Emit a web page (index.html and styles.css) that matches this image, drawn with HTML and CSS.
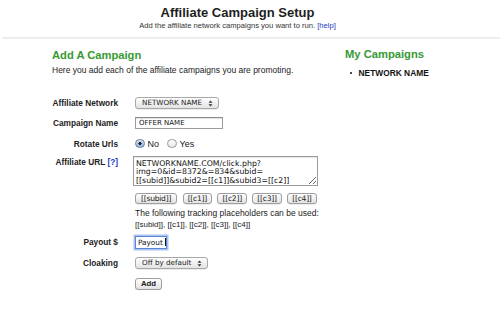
FILE: index.html
```html
<!DOCTYPE html>
<html lang="en">
<head>
<meta charset="utf-8">
<title>Affiliate Campaign Setup</title>
<link rel="stylesheet" href="styles.css">
</head>
<body>
<header class="top">
  <h1 class="title">Affiliate Campaign Setup</h1>
  <p class="subtitle">Add the affiliate network campaigns you want to run. <a class="link" href="#">[help]</a></p>
</header>
<main class="main">
  <section class="left">
    <h2 class="heading">Add A Campaign</h2>
    <p class="desc">Here you add each of the affiliate campaigns you are promoting.</p>
    <form class="form">
      <div class="row row-network">
        <label class="lbl">Affiliate Network</label>
        <div class="select-wrap w-network">
          <select class="select"><option>NETWORK NAME</option></select>
          <svg class="arrows" width="5" height="7" viewBox="0 0 5 7"><path d="M0.5 2.8L2.5 0.6L4.5 2.8Z M0.5 4.2L2.5 6.4L4.5 4.2Z" fill="#333"/></svg>
        </div>
      </div>
      <div class="row row-name">
        <label class="lbl">Campaign Name</label>
        <input class="text w-name" type="text" value="OFFER NAME">
      </div>
      <div class="row row-rotate">
        <label class="lbl">Rotate Urls</label>
        <div class="radios">
          <input class="radio" type="radio" name="rot" checked>
          <span class="rtext">No</span>
          <input class="radio" type="radio" name="rot">
          <span class="rtext">Yes</span>
        </div>
      </div>
      <div class="row row-url">
        <label class="lbl lbl-url">Affiliate URL <a class="link" href="#">[?]</a></label>
        <div class="url-col">
          <textarea class="area">NETWORKNAME.COM/click.php?
img=0&amp;id=8372&amp;=834&amp;subid=
[[subid]]&amp;subid2=[[c1]]&amp;subid3=[[c2]]</textarea>
          <div class="ph-row">
            <button class="btn btn-ph btn-subid" type="button">[[subid]]</button>
            <button class="btn btn-ph" type="button">[[c1]]</button>
            <button class="btn btn-ph" type="button">[[c2]]</button>
            <button class="btn btn-ph" type="button">[[c3]]</button>
            <button class="btn btn-ph" type="button">[[c4]]</button>
          </div>
          <p class="help1">The following tracking placeholders can be used:</p>
          <p class="help2">[[subid]], [[c1]], [[c2]], [[c3]], [[c4]]</p>
        </div>
      </div>
      <div class="row row-payout">
        <label class="lbl">Payout $</label>
        <span class="focus-wrap"><input class="text w-payout focus" type="text" value="Payout"></span>
      </div>
      <div class="row row-cloak">
        <label class="lbl">Cloaking</label>
        <div class="select-wrap w-cloak">
          <select class="select"><option>Off by default</option></select>
          <svg class="arrows" width="5" height="7" viewBox="0 0 5 7"><path d="M0.5 2.8L2.5 0.6L4.5 2.8Z M0.5 4.2L2.5 6.4L4.5 4.2Z" fill="#333"/></svg>
        </div>
      </div>
      <div class="row row-add">
        <span class="lbl"></span>
        <button class="btn btn-add" type="button">Add</button>
      </div>
    </form>
  </section>
  <aside class="right">
    <h2 class="heading">My Campaigns</h2>
    <ul class="list">
      <li class="item"><span class="dot"></span>NETWORK NAME</li>
    </ul>
  </aside>
</main>
</body>
</html>
```
FILE: styles.css
```css
* { box-sizing: border-box; }

body {
  margin: 0;
  font-family: "Liberation Sans", Arial, sans-serif;
  color: #222;
  background: #fff;
}

.top {
  margin: 0 4px 0 2px;
  padding: 5px 27px 7px 0;
  border-bottom: 2px solid #eeeeee;
  text-align: center;
}

.title {
  margin: 0;
  font-size: 13px;
  line-height: 15px;
  font-weight: bold;
  color: #1e1e1e;
}

.subtitle {
  margin: 1px 0 0;
  font-size: 7.6px;
  line-height: 9px;
  color: #333;
}

.link {
  color: #2638c0;
  text-decoration: none;
}

.main {
  display: flex;
  padding-left: 52px;
}

.left { width: 293px; }

.heading {
  margin: 0;
  font-size: 11.2px;
  line-height: 13px;
  font-weight: bold;
  color: #359a33;
}

.left .heading { margin-top: 9.5px; }
.right .heading { margin-top: 8.5px; }

.desc {
  margin: 3.5px 0 0;
  font-size: 8.5px;
  line-height: 10px;
  color: #222;
}

.form {
  margin: 22px 0 0;
  display: flex;
  flex-direction: column;
}

.row {
  display: flex;
  align-items: center;
  gap: 17px;
}

.lbl {
  width: 66px;
  flex: none;
  text-align: right;
  font-size: 8.3px;
  line-height: 10px;
  font-weight: bold;
  color: #222;
  white-space: nowrap;
}

.row-network { height: 12px; }
.row-name { margin-top: 8px; }
.row-rotate { margin-top: 8.5px; height: 12px; }
.row-url { margin-top: 6.5px; align-items: flex-start; }
.row-payout { margin-top: 5.5px; }
.row-cloak { margin-top: 8.5px; }
.row-add { margin-top: 9px; }

.lbl-url { padding-top: 0.5px; }

/* selects */
.select-wrap {
  position: relative;
  display: flex;
  height: 12px;
}
.w-network { width: 84px; }
.w-cloak { width: 73px; }

.select {
  appearance: none;
  -webkit-appearance: none;
  display: block;
  width: 100%;
  height: 12px;
  margin: 0;
  padding: 0 0 0 6px;
  border: 1px solid #a8a8a8;
  border-radius: 3px;
  background: linear-gradient(#ffffff, #f0f0f0 50%, #e4e4e4);
  box-shadow: 0 0.5px 0.5px rgba(0,0,0,0.15);
  font-family: "DejaVu Sans", sans-serif;
  font-size: 7.2px;
  line-height: 10px;
  color: #222;
}

.arrows {
  position: absolute;
  right: 6px;
  top: 2.5px;
}

/* text inputs */
.text {
  height: 12px;
  margin: 0;
  padding: 0 3px;
  border: 1px solid #9b9b9b;
  border-top-color: #8a8a8a;
  box-shadow: inset 0 1px 1px rgba(0,0,0,0.12);
  font-family: "DejaVu Sans", sans-serif;
  font-size: 7px;
  color: #111;
  background: #fff;
}
.w-name { width: 88px; }

.focus-wrap {
  position: relative;
  display: block;
  height: 13px;
}
.w-payout { display: block; width: 32px; height: 13px; padding: 0 2px; font-size: 7.3px; }
.focus {
  border: 1px solid #5b86d4;
  outline: none;
  box-shadow: 0 0 0 1.5px #a9c3ee;
}
.focus-wrap::after {
  content: "";
  position: absolute;
  left: 29.5px;
  top: 2.5px;
  width: 1px;
  height: 8px;
  background: #111;
}

/* radios */
.radios {
  display: flex;
  align-items: center;
  height: 12px;
}
.radio {
  appearance: none;
  -webkit-appearance: none;
  width: 9.5px;
  height: 9.5px;
  margin: 0;
  border: 1px solid #9a9a9a;
  border-radius: 50%;
  background: linear-gradient(#fdfdfd, #e9e9e9);
}
.radio:checked {
  border-color: #6f7f99;
  background: radial-gradient(circle, #1d1d1d 0 1.4px, transparent 1.8px), linear-gradient(#cfe0f6, #8fb3e0);
}
.rtext {
  font-size: 9px;
  line-height: 10px;
  margin: 0 8px 0 3px;
  color: #222;
}

/* url column */
.url-col {
  display: flex;
  flex-direction: column;
  align-items: flex-start;
}

.area {
  display: block;
  width: 185px;
  height: 30px;
  margin: 0 0 0 -2px;
  padding: 2.5px 2px 0;
  border: 1px solid #9b9b9b;
  box-shadow: inset 0 1px 1px rgba(0,0,0,0.1);
  font-family: "DejaVu Sans", sans-serif;
  font-size: 7.8px;
  line-height: 8.5px;
  color: #111;
  resize: both;
  overflow: hidden;
  white-space: pre;
}

.ph-row {
  display: flex;
  gap: 5.5px;
  margin-top: 6.5px;
}

.btn {
  height: 11.5px;
  margin: 0;
  padding: 0 4px;
  border: 1px solid #9d9d9d;
  border-radius: 3px;
  background: linear-gradient(#ffffff, #f1f1f1 50%, #e2e2e2);
  box-shadow: 0 0.5px 0.5px rgba(0,0,0,0.15);
  font-family: "DejaVu Sans", sans-serif;
  font-size: 7.6px;
  line-height: 9px;
  color: #222;
}

.btn-ph { letter-spacing: -0.25px; }
.btn-subid { padding: 0 5px; }

.btn-add {
  width: 27px;
  padding: 0;
  font-family: "Liberation Sans", Arial, sans-serif;
  font-weight: bold;
  font-size: 7.8px;
}

.help1 {
  margin: 4px 0 0;
  font-size: 8.5px;
  line-height: 10px;
  color: #222;
}

.help2 {
  margin: 2px 0 0;
  font-size: 8px;
  line-height: 10px;
  color: #222;
}

/* right column */
.right { flex: 1; }

.list {
  list-style: none;
  margin: 7.5px 0 0;
  padding: 0 0 0 4.5px;
}

.item {
  display: flex;
  align-items: center;
  gap: 6.5px;
  font-size: 8.4px;
  line-height: 10px;
  font-weight: bold;
  color: #111;
}

.dot {
  width: 2.5px;
  height: 2.5px;
  border-radius: 50%;
  background: #111;
}
```
